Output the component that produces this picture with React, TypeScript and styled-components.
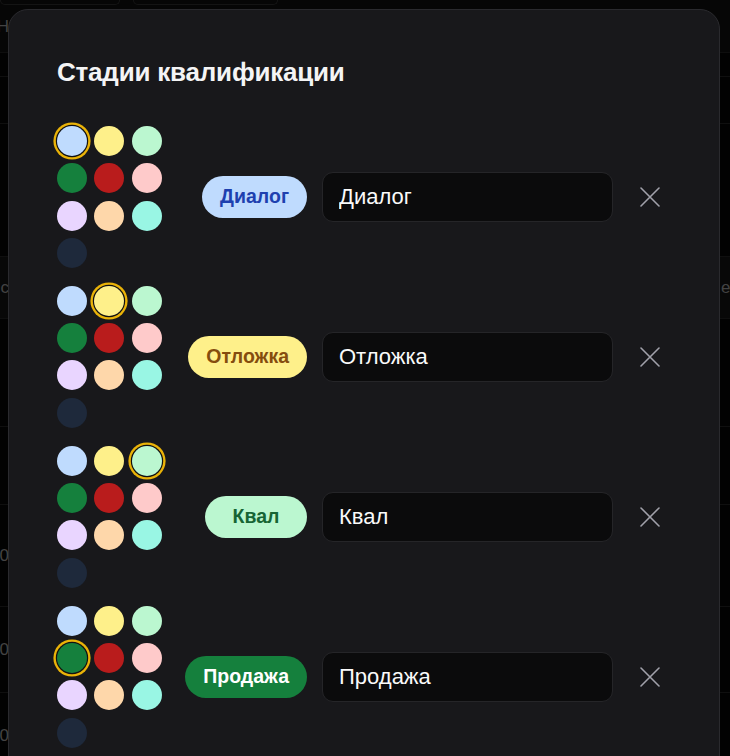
import React, { useState } from 'react';
import styled, { createGlobalStyle } from 'styled-components';

const GlobalStyle = createGlobalStyle`
  html, body {
    margin: 0;
    padding: 0;
    background: #000;
    height: 756px;
    overflow: hidden;
  }
  * { box-sizing: border-box; }
  body {
    font-family: "Liberation Sans", Arial, sans-serif;
    color: #fff;
  }
`;

const Screen = styled.div`
  position: relative;
  width: 730px;
  height: 756px;
  overflow: hidden;
  background: #050505;
`;

/* page behind the dialog, dimmed by the overlay */
const Backdrop = styled.div`
  display: flex;
  flex-direction: column;
`;

const TopBar = styled.div`
  height: 53px;
  display: flex;
  flex-direction: column;
  border-bottom: 1px solid #1a1a1a;
  background: #0b0b0b;
`;

const Controls = styled.div`
  display: flex;
  gap: 13px;
`;

const TopControl = styled.div<{ $w: number }>`
  width: ${p => p.$w}px;
  height: 5px;
  border: 1px solid #262626;
  border-top: none;
  border-radius: 0 0 6px 6px;
`;

const TopLabel = styled.div`
  height: 44px;
  display: flex;
  align-items: center;
  color: #7a7a7a;
  font-size: 17px;
`;

const TableRow = styled.div<{ $h: number; $header?: boolean }>`
  height: ${p => p.$h}px;
  display: flex;
  align-items: center;
  justify-content: space-between;
  border-bottom: 1px solid #1c1c1c;
  background: ${p => (p.$header ? '#101010' : '#050505')};
  color: #7a7a7a;
  font-size: 17px;
`;

const EdgeCell = styled.div<{ $align: 'left' | 'right' }>`
  width: 9px;
  overflow: hidden;
  display: flex;
  justify-content: ${p => (p.$align === 'left' ? 'flex-end' : 'flex-start')};
  white-space: nowrap;
`;

const Dim = styled.div`
  position: absolute;
  inset: 0;
  background: rgba(0, 0, 0, 0.45);
`;

const Dialog = styled.div`
  position: absolute;
  left: 8px;
  top: 9px;
  width: 712px;
  height: 800px;
  background: #18181b;
  border: 1px solid #2a2a2e;
  border-radius: 20px;
  padding: 47px 48px 0 48px;
`;

const Title = styled.h2`
  margin: 0 0 39px 0;
  font-size: 26px;
  line-height: 30px;
  font-weight: 700;
  color: #f4f4f5;
  letter-spacing: -0.2px;
`;

const StageList = styled.div`
  display: flex;
  flex-direction: column;
  gap: 18px;
`;

const StageRow = styled.div`
  display: grid;
  grid-template-columns: 105px 130px 291px 44px;
  column-gap: 15px;
  align-items: center;
`;

const Palette = styled.div`
  display: grid;
  grid-template-columns: repeat(3, 30px);
  grid-auto-rows: 30px;
  column-gap: 7.3px;
  row-gap: 7.3px;
`;

const Swatch = styled.button<{ $color: string; $active: boolean }>`
  width: 30px;
  height: 30px;
  padding: 0;
  border: none;
  border-radius: 50%;
  background: ${p => p.$color};
  cursor: pointer;
  box-shadow: ${p =>
    p.$active ? '0 0 0 1.2px #111113, 0 0 0 3.6px #eab308' : 'none'};
`;

const Pill = styled.span<{ $bg: string; $fg: string }>`
  justify-self: end;
  min-width: 102px;
  height: 42px;
  display: inline-flex;
  align-items: center;
  justify-content: center;
  padding: 0 18px;
  border-radius: 21px;
  background: ${p => p.$bg};
  color: ${p => p.$fg};
  font-size: 19.5px;
  font-weight: 700;
`;

const NameInput = styled.input`
  width: 291px;
  height: 50px;
  padding: 0 16px;
  border-radius: 11px;
  border: 1px solid #252528;
  background: #0b0b0c;
  color: #fafafa;
  font-family: "Liberation Sans", Arial, sans-serif;
  font-size: 22px;
  outline: none;
`;

const RemoveButton = styled.button`
  width: 44px;
  height: 44px;
  display: flex;
  align-items: center;
  justify-content: center;
  padding: 0;
  border: none;
  background: transparent;
  color: #a1a1aa;
  cursor: pointer;
`;

type Tone = { bg: string; fg: string };

const palette: Tone[] = [
  { bg: '#bfdbfe', fg: '#1e40af' },
  { bg: '#fef08a', fg: '#854d0e' },
  { bg: '#bbf7d0', fg: '#166534' },
  { bg: '#15803d', fg: '#ffffff' },
  { bg: '#b91c1c', fg: '#ffffff' },
  { bg: '#fecaca', fg: '#991b1b' },
  { bg: '#e9d5ff', fg: '#6b21a8' },
  { bg: '#fed7aa', fg: '#9a3412' },
  { bg: '#99f6e4', fg: '#115e59' },
  { bg: '#1e293b', fg: '#e2e8f0' },
];

type Stage = { id: number; name: string; tone: number };

const initialStages: Stage[] = [
  { id: 1, name: 'Диалог', tone: 0 },
  { id: 2, name: 'Отложка', tone: 1 },
  { id: 3, name: 'Квал', tone: 2 },
  { id: 4, name: 'Продажа', tone: 3 },
];

const rows: { h: number; header?: boolean; left?: string; right?: string }[] = [
  { h: 24 },
  { h: 47 },
  { h: 133 },
  { h: 62, header: true, left: 'с', right: 'е' },
  { h: 108 },
  { h: 78 },
  { h: 102, left: '0' },
  { h: 86, left: '0' },
  { h: 86, left: '0' },
];

const CloseIcon = () => (
  <svg width="20" height="20" viewBox="0 0 20 20" fill="none">
    <path d="M1 1L19 19M19 1L1 19" stroke="currentColor" strokeWidth="1.6" strokeLinecap="round" />
  </svg>
);

export default function App() {
  const [stages, setStages] = useState(initialStages);

  const update = (id: number, patch: Partial<Stage>) =>
    setStages(list => list.map(s => (s.id === id ? { ...s, ...patch } : s)));

  return (
    <>
      <GlobalStyle />
      <Screen>
        <Backdrop>
          <TopBar>
            <Controls>
              <TopControl $w={120} />
              <TopControl $w={145} />
            </Controls>
            <TopLabel>
              <EdgeCell $align="left">Н</EdgeCell>
            </TopLabel>
          </TopBar>
          {rows.map((r, i) => (
            <TableRow key={i} $h={r.h} $header={r.header}>
              <EdgeCell $align="left">{r.left}</EdgeCell>
              <EdgeCell $align="right">{r.right}</EdgeCell>
            </TableRow>
          ))}
        </Backdrop>
        <Dim />
        <Dialog>
          <Title>Стадии квалификации</Title>
          <StageList>
            {stages.map(stage => {
              const tone = palette[stage.tone];
              return (
                <StageRow key={stage.id}>
                  <Palette>
                    {palette.map((c, i) => (
                      <Swatch
                        key={c.bg}
                        $color={c.bg}
                        $active={i === stage.tone}
                        onClick={() => update(stage.id, { tone: i })}
                      />
                    ))}
                  </Palette>
                  <Pill $bg={tone.bg} $fg={tone.fg}>{stage.name}</Pill>
                  <NameInput
                    value={stage.name}
                    onChange={e => update(stage.id, { name: e.target.value })}
                  />
                  <RemoveButton
                    onClick={() => setStages(list => list.filter(s => s.id !== stage.id))}
                  >
                    <CloseIcon />
                  </RemoveButton>
                </StageRow>
              );
            })}
          </StageList>
        </Dialog>
      </Screen>
    </>
  );
}
